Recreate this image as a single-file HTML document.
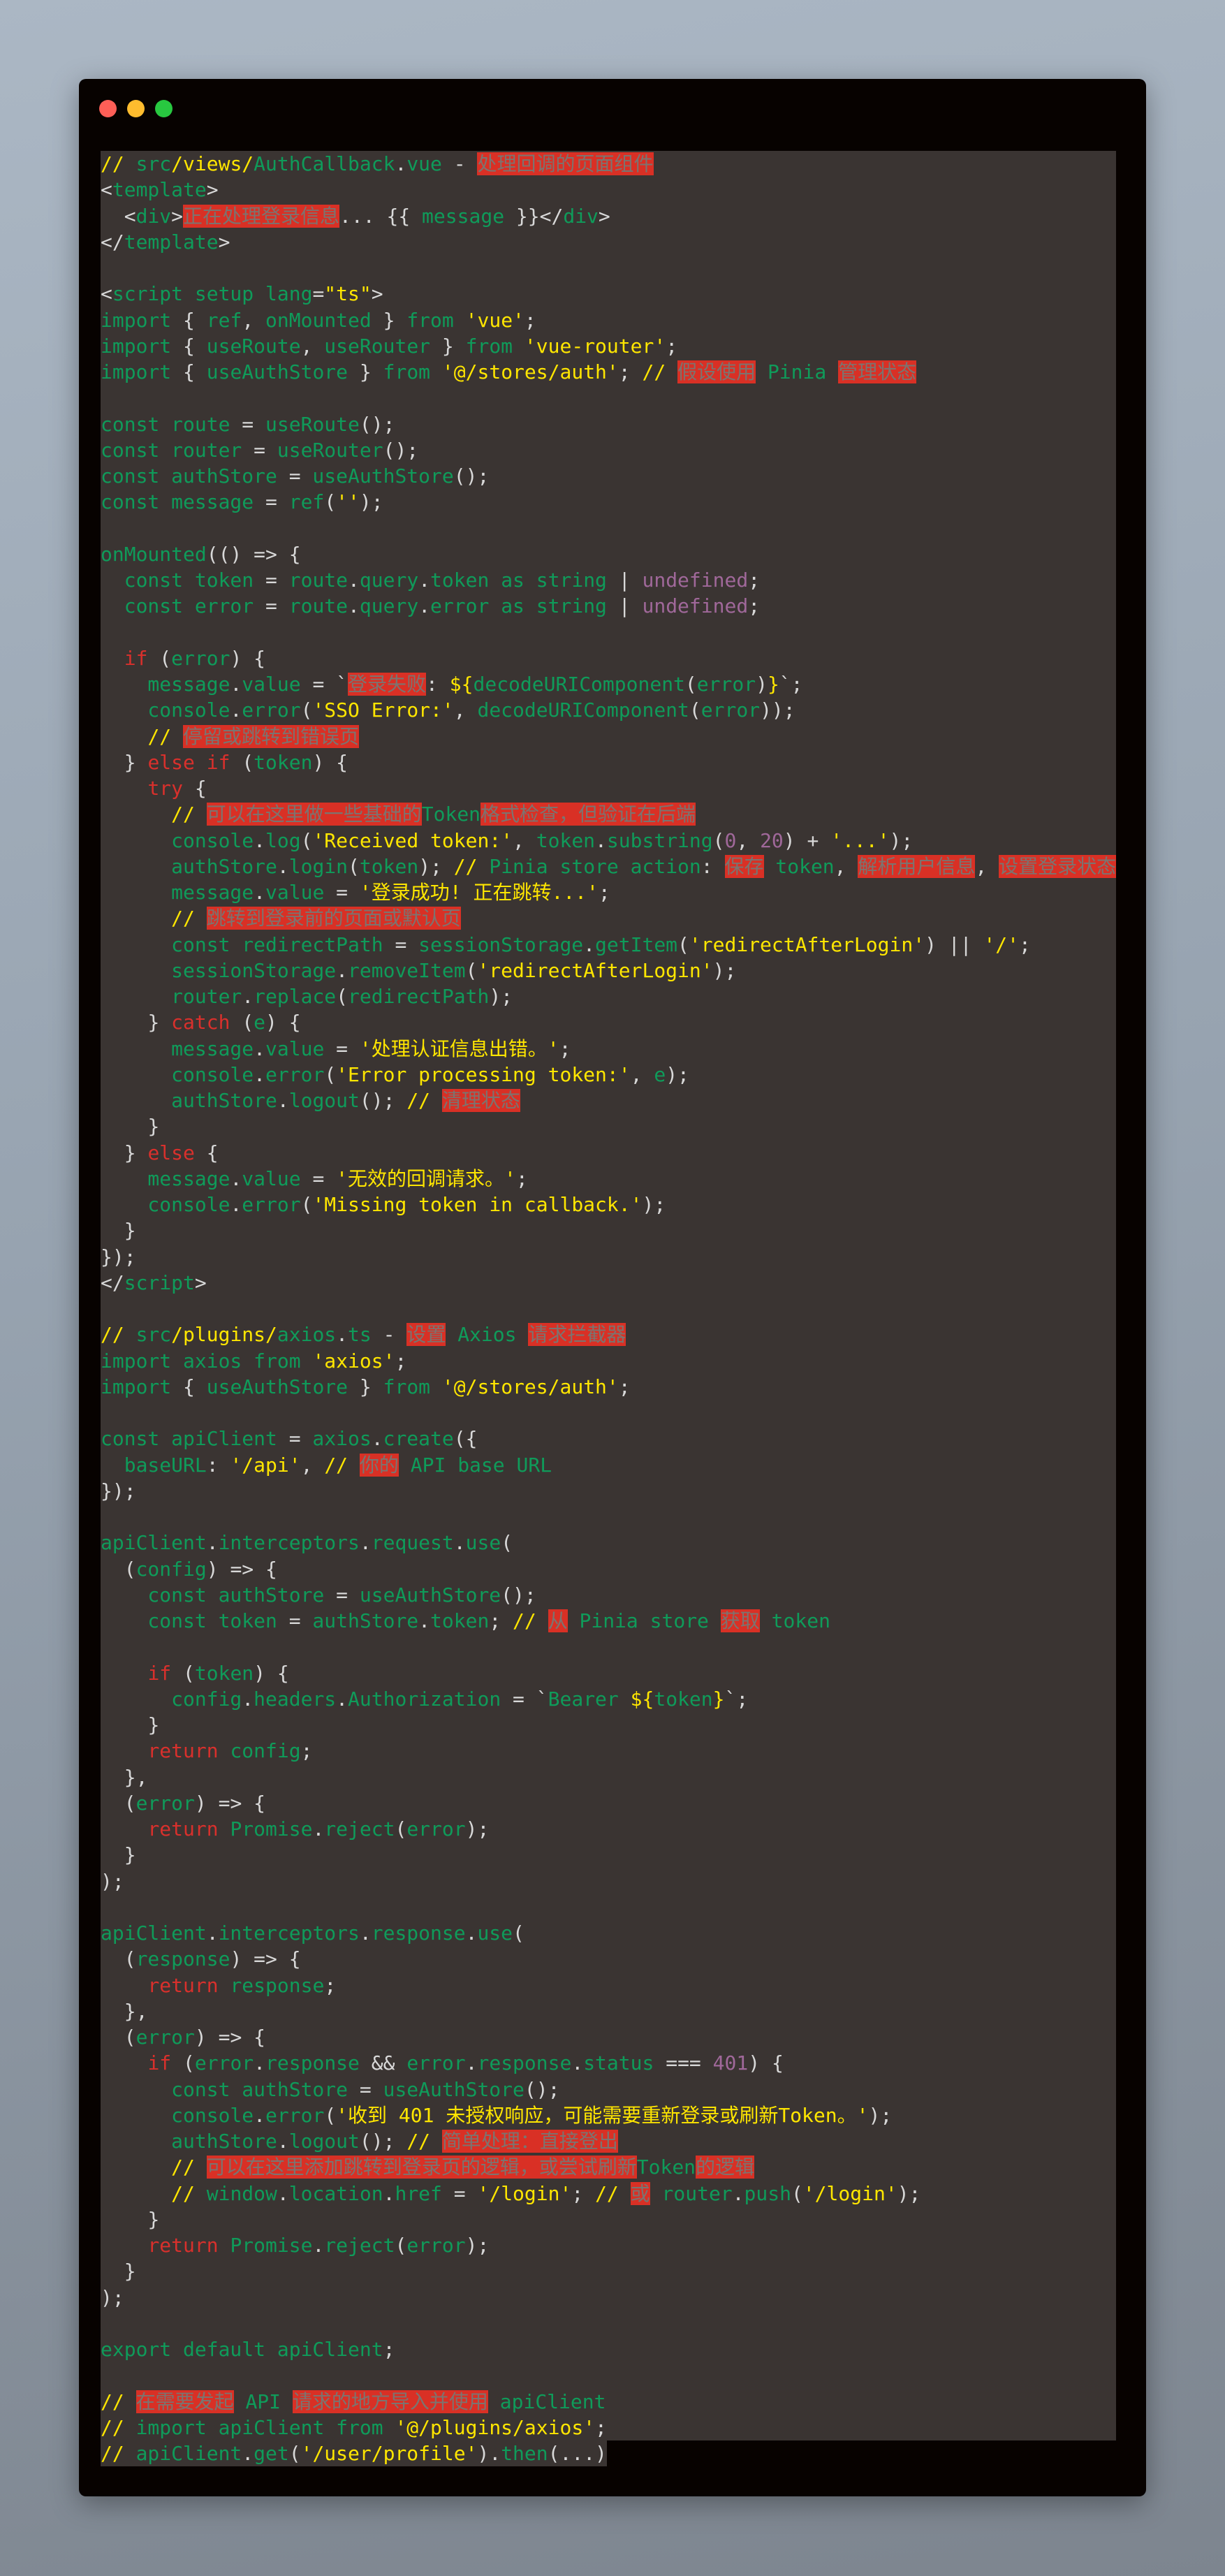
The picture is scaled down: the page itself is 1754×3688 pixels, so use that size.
<!DOCTYPE html>
<html><head><meta charset="utf-8">
<style>
html,body{margin:0;padding:0}
body{width:1754px;height:3688px;position:relative;overflow:hidden;
background:linear-gradient(170deg,#abb7c4 0%,#97a3b0 45%,#7d858f 100%);}
.win{position:absolute;left:113px;top:113px;width:1528px;height:3461px;background:#070200;border-radius:10px;box-shadow:0 10px 40px rgba(0,0,0,.35)}
.dot{position:absolute;top:143px;width:25px;height:25px;border-radius:50%}
.cbg{position:absolute;left:144px;top:216px;width:1454px;height:3278px;background:#3a3432}
.code{position:absolute;left:144px;top:216px;width:1454px;overflow:hidden;
font-family:"DejaVu Sans Mono","Noto Sans CJK SC",monospace;font-size:28px;color:#0f9b5a;white-space:normal}
.code div{height:37.25px;line-height:37.25px;overflow:visible;white-space:pre}
.w{color:#d8d8d8}.y{color:#ffe600}.r{color:#d9302c}.p{color:#a0689a}
.h{background:#d93025;color:#7c7470}
.last{background:#3a3432;display:inline-block;height:37.25px}
</style></head><body>
<div class="win"></div>
<div class="dot" style="left:142px;background:#fe5f57"></div>
<div class="dot" style="left:182px;background:#febc2e"></div>
<div class="dot" style="left:222px;background:#28c840"></div>
<div class="cbg"></div>
<div class="code">
<div><span class="y">//</span> src<span class="y">/views/</span>AuthCallback<span class="w">.</span>vue <span class="w">-</span> <span class="h">处理回调的页面组件</span></div>
<div><span class="w">&lt;</span>template<span class="w">&gt;</span></div>
<div>  <span class="w">&lt;</span>div<span class="w">&gt;</span><span class="h">正在处理登录信息</span><span class="w">... {{</span> message <span class="w">}}&lt;/</span>div<span class="w">&gt;</span></div>
<div><span class="w">&lt;/</span>template<span class="w">&gt;</span></div>
<div> </div>
<div><span class="w">&lt;</span>script setup lang<span class="w">=</span><span class="y">"ts"</span><span class="w">&gt;</span></div>
<div>import <span class="w">{</span> ref<span class="w">,</span> onMounted <span class="w">}</span> from <span class="y">'vue'</span><span class="w">;</span></div>
<div>import <span class="w">{</span> useRoute<span class="w">,</span> useRouter <span class="w">}</span> from <span class="y">'vue-router'</span><span class="w">;</span></div>
<div>import <span class="w">{</span> useAuthStore <span class="w">}</span> from <span class="y">'@/stores/auth'</span><span class="w">;</span> <span class="y">//</span> <span class="h">假设使用</span> Pinia <span class="h">管理状态</span></div>
<div> </div>
<div>const route <span class="w">=</span> useRoute<span class="w">();</span></div>
<div>const router <span class="w">=</span> useRouter<span class="w">();</span></div>
<div>const authStore <span class="w">=</span> useAuthStore<span class="w">();</span></div>
<div>const message <span class="w">=</span> ref<span class="w">(</span><span class="y">''</span><span class="w">);</span></div>
<div> </div>
<div>onMounted<span class="w">(() =&gt; {</span></div>
<div>  const token <span class="w">=</span> route<span class="w">.</span>query<span class="w">.</span>token as string <span class="w">|</span> <span class="p">undefined</span><span class="w">;</span></div>
<div>  const error <span class="w">=</span> route<span class="w">.</span>query<span class="w">.</span>error as string <span class="w">|</span> <span class="p">undefined</span><span class="w">;</span></div>
<div> </div>
<div>  <span class="r">if</span> <span class="w">(</span>error<span class="w">) {</span></div>
<div>    message<span class="w">.</span>value <span class="w">= `</span><span class="h">登录失败</span><span class="w">:</span> <span class="y">${</span>decodeURIComponent<span class="w">(</span>error<span class="w">)</span><span class="y">}</span><span class="w">`;</span></div>
<div>    console<span class="w">.</span>error<span class="w">(</span><span class="y">'SSO Error:'</span><span class="w">,</span> decodeURIComponent<span class="w">(</span>error<span class="w">));</span></div>
<div>    <span class="y">//</span> <span class="h">停留或跳转到错误页</span></div>
<div>  <span class="w">}</span> <span class="r">else if</span> <span class="w">(</span>token<span class="w">) {</span></div>
<div>    <span class="r">try</span> <span class="w">{</span></div>
<div>      <span class="y">//</span> <span class="h">可以在这里做一些基础的</span>Token<span class="h">格式检查，但验证在后端</span></div>
<div>      console<span class="w">.</span>log<span class="w">(</span><span class="y">'Received token:'</span><span class="w">,</span> token<span class="w">.</span>substring<span class="w">(</span><span class="p">0</span><span class="w">,</span> <span class="p">20</span><span class="w">) +</span> <span class="y">'...'</span><span class="w">);</span></div>
<div>      authStore<span class="w">.</span>login<span class="w">(</span>token<span class="w">);</span> <span class="y">//</span> Pinia store action<span class="w">:</span> <span class="h">保存</span> token<span class="w">,</span> <span class="h">解析用户信息</span><span class="w">,</span> <span class="h">设置登录状态</span></div>
<div>      message<span class="w">.</span>value <span class="w">=</span> <span class="y">'登录成功! 正在跳转...'</span><span class="w">;</span></div>
<div>      <span class="y">//</span> <span class="h">跳转到登录前的页面或默认页</span></div>
<div>      const redirectPath <span class="w">=</span> sessionStorage<span class="w">.</span>getItem<span class="w">(</span><span class="y">'redirectAfterLogin'</span><span class="w">) ||</span> <span class="y">'/'</span><span class="w">;</span></div>
<div>      sessionStorage<span class="w">.</span>removeItem<span class="w">(</span><span class="y">'redirectAfterLogin'</span><span class="w">);</span></div>
<div>      router<span class="w">.</span>replace<span class="w">(</span>redirectPath<span class="w">);</span></div>
<div>    <span class="w">}</span> <span class="r">catch</span> <span class="w">(</span>e<span class="w">) {</span></div>
<div>      message<span class="w">.</span>value <span class="w">=</span> <span class="y">'处理认证信息出错。'</span><span class="w">;</span></div>
<div>      console<span class="w">.</span>error<span class="w">(</span><span class="y">'Error processing token:'</span><span class="w">,</span> e<span class="w">);</span></div>
<div>      authStore<span class="w">.</span>logout<span class="w">();</span> <span class="y">//</span> <span class="h">清理状态</span></div>
<div>    <span class="w">}</span></div>
<div>  <span class="w">}</span> <span class="r">else</span> <span class="w">{</span></div>
<div>    message<span class="w">.</span>value <span class="w">=</span> <span class="y">'无效的回调请求。'</span><span class="w">;</span></div>
<div>    console<span class="w">.</span>error<span class="w">(</span><span class="y">'Missing token in callback.'</span><span class="w">);</span></div>
<div>  <span class="w">}</span></div>
<div><span class="w">});</span></div>
<div><span class="w">&lt;/</span>script<span class="w">&gt;</span></div>
<div> </div>
<div><span class="y">//</span> src<span class="y">/plugins/</span>axios<span class="w">.</span>ts <span class="w">-</span> <span class="h">设置</span> Axios <span class="h">请求拦截器</span></div>
<div>import axios from <span class="y">'axios'</span><span class="w">;</span></div>
<div>import <span class="w">{</span> useAuthStore <span class="w">}</span> from <span class="y">'@/stores/auth'</span><span class="w">;</span></div>
<div> </div>
<div>const apiClient <span class="w">=</span> axios<span class="w">.</span>create<span class="w">({</span></div>
<div>  baseURL<span class="w">:</span> <span class="y">'/api'</span><span class="w">,</span> <span class="y">//</span> <span class="h">你的</span> API base URL</div>
<div><span class="w">});</span></div>
<div> </div>
<div>apiClient<span class="w">.</span>interceptors<span class="w">.</span>request<span class="w">.</span>use<span class="w">(</span></div>
<div>  <span class="w">(</span>config<span class="w">) =&gt; {</span></div>
<div>    const authStore <span class="w">=</span> useAuthStore<span class="w">();</span></div>
<div>    const token <span class="w">=</span> authStore<span class="w">.</span>token<span class="w">;</span> <span class="y">//</span> <span class="h">从</span> Pinia store <span class="h">获取</span> token</div>
<div> </div>
<div>    <span class="r">if</span> <span class="w">(</span>token<span class="w">) {</span></div>
<div>      config<span class="w">.</span>headers<span class="w">.</span>Authorization <span class="w">= `</span>Bearer <span class="y">${</span>token<span class="y">}</span><span class="w">`;</span></div>
<div>    <span class="w">}</span></div>
<div>    <span class="r">return</span> config<span class="w">;</span></div>
<div>  <span class="w">},</span></div>
<div>  <span class="w">(</span>error<span class="w">) =&gt; {</span></div>
<div>    <span class="r">return</span> Promise<span class="w">.</span>reject<span class="w">(</span>error<span class="w">);</span></div>
<div>  <span class="w">}</span></div>
<div><span class="w">);</span></div>
<div> </div>
<div>apiClient<span class="w">.</span>interceptors<span class="w">.</span>response<span class="w">.</span>use<span class="w">(</span></div>
<div>  <span class="w">(</span>response<span class="w">) =&gt; {</span></div>
<div>    <span class="r">return</span> response<span class="w">;</span></div>
<div>  <span class="w">},</span></div>
<div>  <span class="w">(</span>error<span class="w">) =&gt; {</span></div>
<div>    <span class="r">if</span> <span class="w">(</span>error<span class="w">.</span>response <span class="w">&amp;&amp;</span> error<span class="w">.</span>response<span class="w">.</span>status <span class="w">===</span> <span class="p">401</span><span class="w">) {</span></div>
<div>      const authStore <span class="w">=</span> useAuthStore<span class="w">();</span></div>
<div>      console<span class="w">.</span>error<span class="w">(</span><span class="y">'收到 401 未授权响应，可能需要重新登录或刷新Token。'</span><span class="w">);</span></div>
<div>      authStore<span class="w">.</span>logout<span class="w">();</span> <span class="y">//</span> <span class="h">简单处理：直接登出</span></div>
<div>      <span class="y">//</span> <span class="h">可以在这里添加跳转到登录页的逻辑，或尝试刷新</span>Token<span class="h">的逻辑</span></div>
<div>      <span class="y">//</span> window<span class="w">.</span>location<span class="w">.</span>href <span class="w">=</span> <span class="y">'/login'</span><span class="w">;</span> <span class="y">//</span> <span class="h">或</span> router<span class="w">.</span>push<span class="w">(</span><span class="y">'/login'</span><span class="w">);</span></div>
<div>    <span class="w">}</span></div>
<div>    <span class="r">return</span> Promise<span class="w">.</span>reject<span class="w">(</span>error<span class="w">);</span></div>
<div>  <span class="w">}</span></div>
<div><span class="w">);</span></div>
<div> </div>
<div>export default apiClient<span class="w">;</span></div>
<div> </div>
<div><span class="y">//</span> <span class="h">在需要发起</span> API <span class="h">请求的地方导入并使用</span> apiClient</div>
<div><span class="y">//</span> import apiClient from <span class="y">'@/plugins/axios'</span><span class="w">;</span></div>
<div><span class="last"><span class="y">//</span> apiClient<span class="w">.</span>get<span class="w">(</span><span class="y">'/user/profile'</span><span class="w">).</span>then<span class="w">(...)</span></span></div>
</div>
</body></html>
